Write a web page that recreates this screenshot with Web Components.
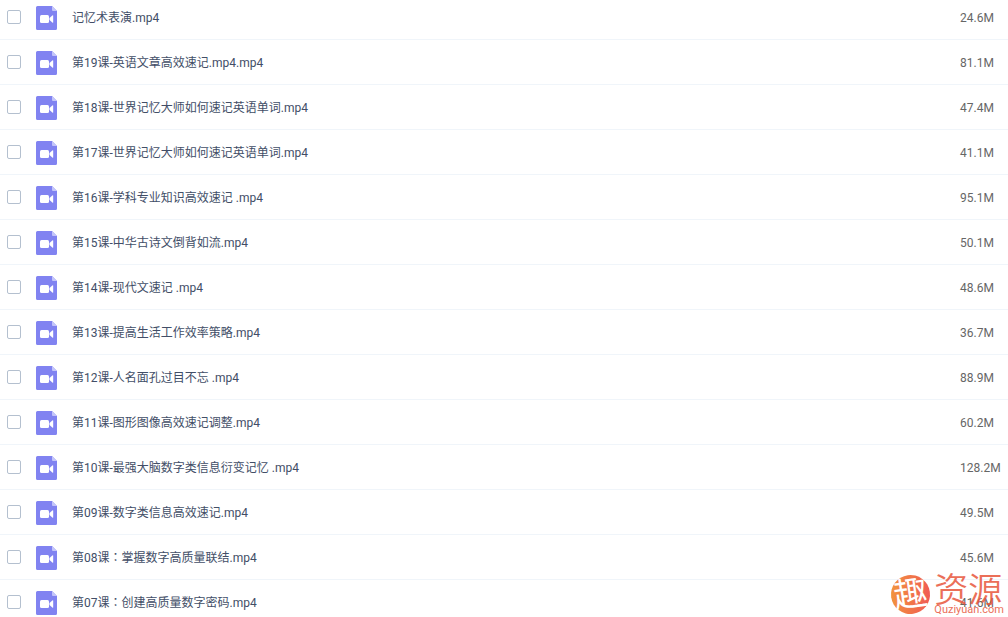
<!DOCTYPE html>
<html lang="zh-CN">
<head>
<meta charset="utf-8">
<title>文件列表</title>
<style>
  body {
    margin: 0;
    height: 100vh;
    overflow: hidden;
    position: relative;
    background: #fff;
    font: 12px/18px Roboto, "Noto Sans CJK SC", sans-serif;
    color: #424e67;
  }
</style>
</head>
<body>
<file-list></file-list>
<site-mark>
  <span slot="glyph">趣</span>
  <span slot="name">资源</span>
  <span slot="domain">Quziyuan.com</span>
</site-mark>

<script>
const files = [
  ['记忆术表演.mp4', '24.6M'],
  ['第19课-英语文章高效速记.mp4.mp4', '81.1M'],
  ['第18课-世界记忆大师如何速记英语单词.mp4', '47.4M'],
  ['第17课-世界记忆大师如何速记英语单词.mp4', '41.1M'],
  ['第16课-学科专业知识高效速记 .mp4', '95.1M'],
  ['第15课-中华古诗文倒背如流.mp4', '50.1M'],
  ['第14课-现代文速记 .mp4', '48.6M'],
  ['第13课-提高生活工作效率策略.mp4', '36.7M'],
  ['第12课-人名面孔过目不忘 .mp4', '88.9M'],
  ['第11课-图形图像高效速记调整.mp4', '60.2M'],
  ['第10课-最强大脑数字类信息衍变记忆 .mp4', '128.2M'],
  ['第09课-数字类信息高效速记.mp4', '49.5M'],
  ['第08课：掌握数字高质量联结.mp4', '45.6M'],
  ['第07课：创建高质量数字密码.mp4', '41.6M']
];

class VideoIcon extends HTMLElement {
  constructor() {
    super();
    this.attachShadow({ mode: 'open' });
  }

  connectedCallback() {
    this.shadowRoot.innerHTML = `
      <style>
        :host { display: block; width: 21px; height: 24px; }
        svg { display: block; }
      </style>
      <svg width="21" height="24" viewBox="0 0 21 24" aria-hidden="true">
        <path fill="#8183f1" d="M1.500 0H16l5 5v17.500a1.500 1.500 0 0 1-1.500 1.500h-18A1.500 1.500 0 0 1 0 22.500v-21A1.500 1.500 0 0 1 1.500 0z"/>
        <path fill="#c4c5fa" d="M16 0l5 5h-4a1 1 0 0 1-1-1z"/>
        <rect x="4" y="9" width="9" height="8" rx="1.500" fill="#fff"/>
        <path fill="#fff" d="M13.500 12L16.300 9.400q.9-.6.9.4v6.400q0 1-.9.4L13.500 14z"/>
      </svg>
    `;
  }
}

class FileList extends HTMLElement {
  constructor() {
    super();
    this.attachShadow({ mode: 'open' });
  }

  connectedCallback() {
    this.shadowRoot.innerHTML = `
      <style>
        /* the list is scrolled a little, its first row is partly out of view */
        :host { display: block; margin-top: -5px; }

        table {
          width: 100%;
          table-layout: fixed;
          border-collapse: separate;
          border-spacing: 0;
        }

        td {
          box-sizing: border-box;
          height: 45px;
          padding: 0;
          border-bottom: 1px solid #f0f5fa;
          vertical-align: middle;
          white-space: nowrap;
        }

        .check { width: 36px; }
        .type { width: 36px; }
        .type video-icon { margin-top: 2px; }
        .name, .size { padding-top: 2px; }
        .size { width: 48px; color: #666; }

        input {
          appearance: none;
          display: block;
          box-sizing: border-box;
          width: 14px;
          height: 14px;
          margin: 0 0 0 7px;
          border: 1px solid #b4c0cf;
          border-radius: 2px;
          background: #fff;
        }

        input:checked { background: #8183f1; }

        a { color: inherit; text-decoration: none; }
        a:hover { color: #8183f1; }

        /* keeps the full-width colon in the middle of its square */
        .colon { font-family: "Noto Sans CJK TC", sans-serif; line-height: 1; }
      </style>
      <table>
        <tbody>
          ${files.map((file, i) => this.row(file, i)).join('')}
        </tbody>
      </table>
    `;
  }

  row([name, size], i) {
    const label = name.replace('：', '<span class="colon" lang="zh-TW">：</span>');
    return `
      <tr>
        <td class="check"><input type="checkbox" aria-labelledby="name-${i}"></td>
        <td class="type"><video-icon></video-icon></td>
        <td class="name"><a href="#" id="name-${i}">${label}</a></td>
        <td class="size">${size}</td>
      </tr>
    `;
  }
}

class SiteMark extends HTMLElement {
  constructor() {
    super();
    this.attachShadow({ mode: 'open' });
  }

  connectedCallback() {
    this.shadowRoot.innerHTML = `
      <style>
        :host {
          position: absolute;
          right: 4px;
          bottom: 3px;
          display: flex;
          align-items: center;
          gap: 4px;
          opacity: .85;
          color: #e8563c;
          pointer-events: none;
        }

        .disc {
          display: flex;
          align-items: center;
          justify-content: center;
          width: 39px;
          height: 39px;
          border-radius: 50%;
          background: linear-gradient(100deg, #f0861a, #ee3a3a);
          color: #fff;
          font-size: 34px;
          line-height: 39px;
          transform: rotate(-8deg);
        }

        .words { display: flex; flex-direction: column; }
        .name { font-size: 34px; line-height: 32px; font-weight: 350; }
        .domain { font-size: 11px; line-height: 8px; }
      </style>
      <div class="disc"><slot name="glyph"></slot></div>
      <div class="words">
        <div class="name"><slot name="name"></slot></div>
        <div class="domain"><slot name="domain"></slot></div>
      </div>
    `;
  }
}

customElements.define('video-icon', VideoIcon);
customElements.define('file-list', FileList);
customElements.define('site-mark', SiteMark);
</script>
</body>
</html>
